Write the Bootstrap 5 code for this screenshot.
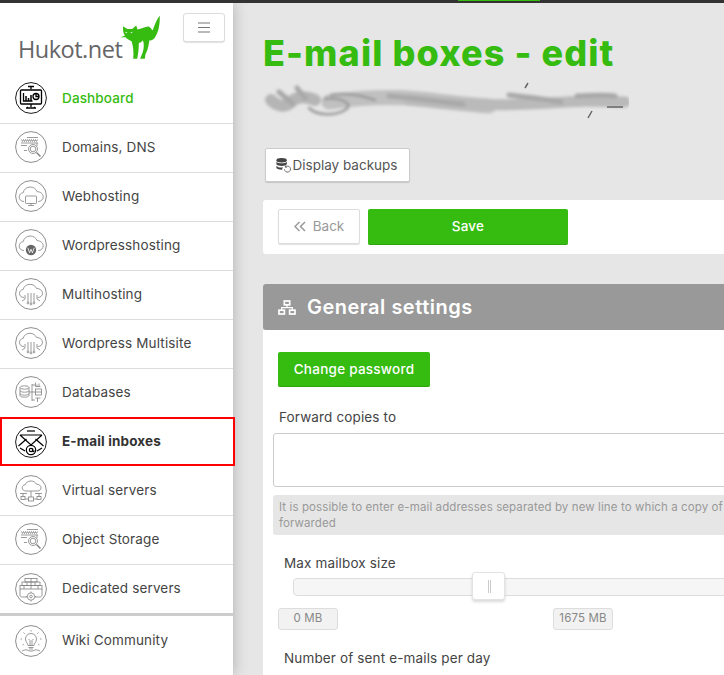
<!DOCTYPE html>
<html lang="en">
<head>
  <meta charset="UTF-8">
  <meta name="viewport" content="width=device-width, initial-scale=1.0">
  <title>E-mail boxes - edit</title>
  <link href="https://cdn.jsdelivr.net/npm/bootstrap@5.3.0/dist/css/bootstrap.min.css" rel="stylesheet">
  <style>
    html, body { height: 675px; overflow: hidden; }
    body {
      background-color: #e6e6e6;
      color: #444;
      font-family: "Inter", "Open Sans", sans-serif;
      font-size: 13.5px;
      letter-spacing: .14px;
    }
    .top-strip { height: 3px; background-color: #333; padding-left: 458px; position: relative; z-index: 3; }
    .top-strip span { display: block; width: 82px; height: 1px; background-color: #36bb10; }

    /* sidebar */
    .side-col {
      flex: 0 0 233px;
      width: 233px;
      min-width: 0;
      height: 672px;
      background-color: #fff;
      box-shadow: 0 0 14px rgba(0, 0, 0, .25);
      position: relative;
      z-index: 2;
    }
    .side-head { height: 72px; padding: 10px 8px 0 18px; }
    .logo-word { font-family: "Open Sans", sans-serif; font-size: 23.5px; color: #666; line-height: 34px; margin-top: 19px; letter-spacing: -.5px; }
    .logo-cat { width: 43px; height: 48px; flex: none; margin-left: -3px; }
    .menu-btn { width: 42px; height: 29px; padding: 0; margin-left: auto; border: 1px solid #ddd; border-radius: 3px; box-shadow: 0 1px 1px rgba(0,0,0,.12); background: #fff; }
    .side-row.list-group-item {
      height: 49px;
      padding: 0 0 2px 15px;
      gap: 15px;
      border-width: 0 0 1px 0;
      border-color: #ddd;
      color: #444;
      font-size: 13.5px;
    }
    .side-row svg { width: 32px; height: 32px; flex: none; color: #808080; }
    .side-row.row-green { color: #36bb10; font-weight: 500; }
    .side-row.row-green svg, .side-row.row-current svg { color: #000; }
    .side-row.row-current {
      width: 235px;
      height: 49px;
      margin-top: -1px;
      padding: 0 0 0 13px;
      border: 2px solid #f00;
      color: #333;
      font-weight: 700;
      z-index: 2;
    }
    .side-row.row-after { height: 50px; padding-bottom: 0; }
    .side-row.row-last { border-bottom: 3px solid #ccc; height: 51px; padding-bottom: 1px; }
    .side-row.row-wiki { border: 0; padding-bottom: 0; }

    /* main */
    .main-col { flex: 0 0 700px; padding: 0 0 0 30px; }
    .page-title { color: #36bb10; font-family: "Inter", sans-serif; font-size: 36px; font-weight: 800; line-height: 42px; margin: 29px 0 0; letter-spacing: 1.1px; }
    .scribble { display: block; width: 370px; height: 44px; margin-top: 6px; margin-left: -4px; }
    .backup-btn { margin: 24px 0 0 2px; height: 34px; width: 145px; padding: 0 3px 0 0; font-size: 13.5px; color: #555; background: #fff; border: 1px solid #ccc; border-radius: 2px; box-shadow: 0 1px 1px rgba(0,0,0,.15); gap: 1px; }
    .action-bar { height: 54px; margin-top: 18px; padding: 9px 15px; background: #fff; border-radius: 3px 0 0 3px; gap: 8px; }
    .back-btn { width: 82px; height: 35px; padding: 0 0 1px; font-size: 13.5px; color: #999; background: #fff; border: 1px solid #ddd; border-radius: 2px; box-shadow: 0 1px 1px rgba(0,0,0,.12); gap: 7px; }
    .btn-green { background: #36bb10; color: #fff; border: 0; border-bottom: 1px solid #2da30c; border-radius: 2px; font-size: 13.5px; font-weight: 500; padding: 0; height: 36px; letter-spacing: .25px; }
    .btn-green:hover { background: #36bb10; color: #fff; }
    .save-btn { width: 200px; }
    .pass-btn { width: 152px; height: 35px; }
    .section-head { height: 46px; margin-top: 30px; padding-left: 15px; background: #999; color: #fff; border-radius: 3px 0 0 3px; gap: 11px; font-size: 20px; font-weight: 600; letter-spacing: .5px; }
    .section-body { background: #fff; height: 345px; padding: 22px 0 0 10px; }
    .section-body .pass-btn { margin-left: 5px; display: block; }
    .forward-label { margin: 22px 0 0 6px; line-height: 16px; color: #444; display: block; }
    .forward-box { display: block; width: 100%; height: 54px; margin-top: 8px; border: 1px solid #ccc; border-radius: 3px; box-shadow: none; }
    .help-note { margin-top: 8px; height: 40px; padding: 4px 6px; background: #e6e6e6; border-radius: 3px; color: #999; font-size: 11.5px; line-height: 16px; letter-spacing: .1px; white-space: nowrap; }
    .field-label { line-height: 16px; color: #444; margin: 20px 0 0 11px; }
    .slide-track { position: relative; height: 18px; margin: 7px 0 0 20px; background: #f6f6f6; border: 1px solid #ddd; border-radius: 4px; }
    .slide-handle { position: absolute; left: 178px; top: -7px; width: 33px; height: 28px; background: #fff; border: 1px solid #e3e3e3; border-radius: 3px; box-shadow: 0 2px 3px rgba(0,0,0,.15); }
    .slide-handle::after { content: ""; position: absolute; left: 15px; top: 7px; width: 3px; height: 13px; border-left: 1px solid #ccc; border-right: 1px solid #ccc; }
    .chip-row { gap: 215px; margin: 12px 0 0 5px; }
    .value-chip { width: 60px; height: 22px; background: #f2f2f2; border: 1px solid #ddd; border-radius: 3px; color: #888; font-size: 11.5px; }
    .sent-label { margin-top: 20px; }
  </style>
</head>
<body>

<!-- ikony menu -->
<svg width="0" height="0" class="position-absolute">
  <defs>
    <g id="ring"><circle cx="16" cy="16" r="15.4" fill="none" stroke="currentColor" stroke-width=".9"/></g>
    <path id="cloud" d="M9 21.500c-3 0-4.800-2-4.800-4.400 0-2.300 1.700-4.100 4-4.400.5-3.300 3.500-5.700 7-5.700 3.200 0 5.900 1.900 6.900 4.700 3-.1 6.100 1.900 6.100 5.100 0 2.700-2.100 4.700-5 4.700"/>
    <symbol id="i-dash" viewBox="0 0 32 32"><use href="#ring"/><g fill="none" stroke="currentColor" stroke-width="1.300"><path d="M13 4.500h6M16 4.500v3"/><rect x="5.500" y="8" width="21" height="14" rx="1"/><path d="M16 22v3M11 26h10M13 25l-1 1M19 25l1 1"/><path d="M8.500 11v8h9"/><path d="M11 19v-5M13.500 19v-3M16 19v-6" stroke-width="1.500"/><circle cx="21" cy="14.500" r="3"/><path d="M21 11.500v3h3"/></g></symbol>
    <symbol id="i-www" viewBox="0 0 32 32"><use href="#ring"/><g fill="none" stroke="currentColor" stroke-width=".8"><path d="M12 6.500h11M6 12h17"/><path d="M6.500 8.500l1 2 1-2 1 2 1-2 1 2 1-2 1 2 1-2 1 2 1-2 1 2 1-2 1 2 1-2 1 2 1-2"/><path d="M6 14.500h6M22 12v3"/><circle cx="18" cy="18" r="4.500"/><circle cx="18" cy="18" r="2.800"/><path d="M21.500 21.500l4 4" stroke-width="1.500"/><path d="M9 19.500l3 0"/></g></symbol>
    <symbol id="i-web" viewBox="0 0 32 32"><use href="#ring"/><g fill="none" stroke="currentColor" stroke-width=".8"><use href="#cloud"/><rect x="10.500" y="16" width="11" height="7.500" rx=".7" fill="#fff"/><path d="M16 23.500v2M13 25.500h6"/></g></symbol>
    <symbol id="i-wp" viewBox="0 0 32 32"><use href="#ring"/><g fill="none" stroke="currentColor" stroke-width=".8"><use href="#cloud"/></g><circle cx="16" cy="21" r="5.200" fill="#666"/><path d="M12.800 18.800l1.800 5 1.400-3.600 1.400 3.600 1.800-5" fill="none" stroke="#fff" stroke-width=".8"/></symbol>
    <symbol id="i-multi" viewBox="0 0 32 32"><use href="#ring"/><g fill="none" stroke="currentColor" stroke-width=".8"><path d="M9 19.500c-2.800 0-4.500-1.800-4.500-4 0-2.200 1.500-3.800 3.700-4.100.6-3 3.300-5.100 6.800-5.100 3 0 5.500 1.700 6.600 4.200 3-.1 5.900 1.800 5.900 4.800 0 2.500-2 4.200-4.700 4.200"/><path d="M13 15v9M16 15v10M19 15v9M10 17v4l-3 2M22 17v4l3 2"/><circle cx="13" cy="25" r=".9"/><circle cx="16" cy="26" r=".9"/><circle cx="19" cy="25" r=".9"/></g></symbol>
    <symbol id="i-db" viewBox="0 0 32 32"><use href="#ring"/><g fill="none" stroke="currentColor" stroke-width=".8"><ellipse cx="9.500" cy="11.500" rx="4.500" ry="1.700"/><path d="M5 11.500v8c0 1 2 1.700 4.500 1.700s4.500-.7 4.500-1.700v-8M5 14.500c0 1 2 1.700 4.500 1.700s4.500-.7 4.500-1.700M5 17.500c0 1 2 1.700 4.500 1.700s4.500-.7 4.500-1.700"/><path d="M14 16h3M17 8v17M17 9h3M17 16h3M17 24h3"/><path d="M20.500 6.500v4h5M22 8.500v2M24 7.500v3"/><rect x="20.500" y="13" width="6" height="6"/><path d="M20.500 16h6"/><path d="M20.500 22h5M22.500 22v4"/></g></symbol>
    <symbol id="i-mail" viewBox="0 0 32 32"><use href="#ring"/><g fill="none" stroke="currentColor" stroke-width="1.200"><path d="M12 5h8"/><path d="M5 9l11 10 11-10M5 9l11 0 11 0"/><path d="M3.500 20l8-7M28.500 20l-8-7M5 22l5 3M27 22l-5 3"/><circle cx="16" cy="24" r="4.700" fill="#fff"/><circle cx="16" cy="24" r="1.700"/><path d="M17.700 22.500v2.500c0 1 1.500 1 1.500-.5"/></g></symbol>
    <symbol id="i-virt" viewBox="0 0 32 32"><use href="#ring"/><g fill="none" stroke="currentColor" stroke-width=".8"><path d="M11 16c-2.400 0-3.800-1.300-3.800-3.100 0-1.700 1.200-3 3-3.200.6-2.200 2.900-3.700 5.800-3.700 2.500 0 4.600 1.300 5.400 3.200 2.500-.1 4.600 1.300 4.600 3.700 0 1.900-1.600 3.100-3.800 3.100z"/><path d="M16 16v6M5 18.500h7M20 18.500h7M8 18.500v3M24 18.500v3"/><rect x="13.500" y="22" width="5" height="4"/><rect x="6" y="21.500" width="4" height="3"/><rect x="22" y="21.500" width="4" height="3"/><path d="M10 24h3.500M18.500 24h3.500"/></g></symbol>
    <symbol id="i-ded" viewBox="0 0 32 32"><use href="#ring"/><g fill="none" stroke="currentColor" stroke-width=".8"><rect x="10" y="5.500" width="12" height="3.500"/><rect x="7" y="9" width="18" height="3.500"/><rect x="5" y="12.500" width="22" height="3.500"/><path d="M9 16v-3M12 12.500v-3M16 16V5.500M20 12.500v-3M23 16v-3"/><path d="M5 16v6c0 1 .8 2 2 2h5M27 16v6c0 1-.8 2-2 2h-5"/><circle cx="16" cy="23.500" r="3.700"/><circle cx="16" cy="23.500" r="1.300"/><path d="M16 18.500v1.300M16 27.200v1.300M11 23.500h1.300M19.700 23.500H21"/></g></symbol>
    <symbol id="i-bulb" viewBox="0 0 32 32"><use href="#ring"/><g fill="none" stroke="currentColor" stroke-width=".8"><path d="M13 20.500c0-2-2.500-3.400-2.500-6.500a5.500 5.500 0 0 1 11 0c0 3.100-2.500 4.500-2.500 6.500z"/><path d="M13.500 22.500h5M14 24h4M15 20.500v-5l-1.500-1.500M17 20.500v-5l1.500-1.500"/><path d="M16 5v1.500M8.500 7.500l1.200 1.200M23.500 7.500l-1.200 1.200M5.500 14H7M25 14h1.500M7.500 20l1.300-.8M24.500 20l-1.300-.8"/><path d="M7 26c3-1.500 5-1.500 6-.5 1 .8 5 .8 6 0 1-1 3-1 6 .5"/></g></symbol>
  </defs>
</svg>

<div class="top-strip"><span></span></div>

<div class="d-flex">
  <!-- menu lateral -->
  <aside class="side-col">
    <div class="side-head d-flex align-items-start">
      <span class="logo-word">Hukot.net</span>
      <svg class="logo-cat" viewBox="360 40 130 145">
        <path fill="#36bb10" d="M372 80L385 88H400L412 78L416 90C430 88 445 78 452 82C458 86 460 92 462 92C466 82 472 62 483 48C484 65 482 90 472 108C466 120 458 125 452 122C450 135 448 150 440 165L438 178H424L432 158C436 145 436 130 432 122C428 128 425 130 420 130C420 145 418 165 415 178H403C405 160 403 140 398 125C392 122 384 118 380 113H365L378 108C372 100 372 90 372 80Z"/>
        <path fill="#fff" d="M379 97l7 3-5 1zM401 97l-7 3 5 1z"/>
      </svg>
      <button class="btn menu-btn d-flex align-items-center justify-content-center" type="button" aria-label="Menu">
        <svg width="12" height="11" viewBox="0 0 12 11"><path d="M0 1h12M0 5.500h12M0 10h12" stroke="#777" stroke-width="1.200"/></svg>
      </button>
    </div>
    <div class="list-group list-group-flush">
      <a href="#" class="list-group-item side-row row-green d-flex align-items-center"><svg><use href="#i-dash"/></svg>Dashboard</a>
      <a href="#" class="list-group-item side-row d-flex align-items-center"><svg><use href="#i-www"/></svg>Domains, DNS</a>
      <a href="#" class="list-group-item side-row d-flex align-items-center"><svg><use href="#i-web"/></svg>Webhosting</a>
      <a href="#" class="list-group-item side-row d-flex align-items-center"><svg><use href="#i-wp"/></svg>Wordpresshosting</a>
      <a href="#" class="list-group-item side-row d-flex align-items-center"><svg><use href="#i-multi"/></svg>Multihosting</a>
      <a href="#" class="list-group-item side-row d-flex align-items-center"><svg><use href="#i-multi"/></svg>Wordpress Multisite</a>
      <a href="#" class="list-group-item side-row d-flex align-items-center"><svg><use href="#i-db"/></svg>Databases</a>
      <a href="#" class="list-group-item side-row row-current d-flex align-items-center"><svg><use href="#i-mail"/></svg>E-mail inboxes</a>
      <a href="#" class="list-group-item side-row row-after d-flex align-items-center"><svg><use href="#i-virt"/></svg>Virtual servers</a>
      <a href="#" class="list-group-item side-row d-flex align-items-center"><svg><use href="#i-www"/></svg>Object Storage</a>
      <a href="#" class="list-group-item side-row row-last d-flex align-items-center"><svg><use href="#i-ded"/></svg>Dedicated servers</a>
      <a href="#" class="list-group-item side-row row-wiki d-flex align-items-center"><svg><use href="#i-bulb"/></svg>Wiki Community</a>
    </div>
  </aside>

  <!-- obsah -->
  <main class="main-col">
    <h1 class="page-title">E-mail boxes - edit</h1>
    <svg class="scribble" viewBox="0 0 370 44">
      <defs>
        <filter id="smear" x="-5%" y="-30%" width="110%" height="160%"><feGaussianBlur stdDeviation="1.800"/></filter>
        <filter id="smear-thin" x="-20%" y="-100%" width="140%" height="300%"><feGaussianBlur stdDeviation=".6"/></filter>
      </defs>
      <g fill="none" filter="url(#smear)" stroke-linecap="round">
        <path stroke="#b5b5b5" stroke-width="12" d="M12 20c6 6 14 8 20 2s14-6 24-2"/>
        <path stroke="#c0c0c0" stroke-width="15" d="M70 22c30-4 60-6 90-3s50 6 70 7"/>
        <path stroke="#bababa" stroke-width="11" d="M150 20c40 4 80 6 120 4s50-4 96-2"/>
        <path stroke="#999" stroke-width="2.500" d="M50 28c8 8 26 8 36 2s-4-13-20-11M72 15c16-3 30 0 44 5"/>
        <path stroke="#a8a8a8" stroke-width="5" d="M20 12l14 12M38 8l8 10M130 16c26 2 50 6 74 8M250 15c18 2 36 4 52 7M318 16c10 0 26-2 38 0"/>
      </g>
      <path d="M329 38l4-7M348 27h16M266 8l3-5" stroke="#666" stroke-width="1.500" fill="none" filter="url(#smear-thin)"/>
    </svg>

    <button class="btn backup-btn d-inline-flex align-items-center justify-content-center" type="button">
      <svg width="17" height="18" viewBox="0 0 18 18">
        <g fill="#444"><ellipse cx="7" cy="4" rx="5.500" ry="2.400"/><path d="M1.500 5.500c1.500 2.300 9.500 2.300 11 0v2.800c-1.500 2.300-9.500 2.300-11 0zM1.500 9.800c1.200 1.900 5 2.200 7 1.700-.6.800-1 1.700-1 2.500-2.500.1-5-.5-6-1.700z"/></g>
        <path d="M10 13.500a3.200 3.200 0 1 0 1-2.500M11 9.500v1.800h1.800" fill="none" stroke="#555" stroke-width=".9"/>
      </svg>Display backups
    </button>

    <div class="action-bar d-flex">
      <button class="btn back-btn d-flex align-items-center justify-content-center" type="button">
        <svg width="12" height="11" viewBox="0 0 12 11"><path d="M5.500 1L1 5.500 5.500 10M11 1L6.500 5.500 11 10" fill="none" stroke="#999" stroke-width="1.500"/></svg>Back
      </button>
      <button class="btn btn-green save-btn" type="button">Save</button>
    </div>

    <div class="section-head d-flex align-items-center">
      <svg width="18" height="15" viewBox="0 0 18 15"><g fill="none" stroke="#fff" stroke-width="1.700"><rect x="6.300" y="1" width="5.400" height="3.800"/><rect x="1" y="10.200" width="5.400" height="3.800"/><rect x="11.600" y="10.200" width="5.400" height="3.800"/><path d="M9 4.800v2.900M3.700 10.200V7.700h10.600v2.500" stroke-width="1.200"/></g></svg>
      General settings
    </div>
    <div class="section-body">
      <button class="btn btn-green pass-btn" type="button">Change password</button>
      <label class="forward-label" for="forward-to">Forward copies to</label>
      <textarea class="form-control forward-box" id="forward-to"></textarea>
      <div class="help-note">It is possible to enter e-mail addresses separated by new line to which a copy of<br>forwarded</div>
      <div class="field-label">Max mailbox size</div>
      <div class="slide-track"><div class="slide-handle"></div></div>
      <div class="d-flex chip-row">
        <span class="value-chip d-flex align-items-center justify-content-center">0 MB</span>
        <span class="value-chip d-flex align-items-center justify-content-center">1675 MB</span>
      </div>
      <div class="field-label sent-label">Number of sent e-mails per day</div>
    </div>
  </main>
</div>

<script src="https://cdn.jsdelivr.net/npm/bootstrap@5.3.0/dist/js/bootstrap.bundle.min.js"></script>
</body>
</html>
